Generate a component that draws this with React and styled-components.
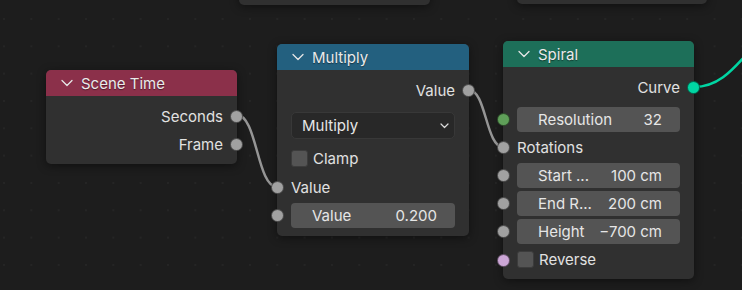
import React from "react";
import styled, { createGlobalStyle } from "styled-components";

const GlobalStyle = createGlobalStyle`
    html, body {
        margin: 0;
        padding: 0;
        background: #1d1d1d;
    }
    body {
        font-family: Inter, "Noto Sans", "DejaVu Sans", sans-serif;
        font-size: 15px;
        color: #e1e1e1;
    }
`;

const SOCKET = {
    gray: "#a1a1a1",
    int: "#5f9f59",
    geo: "#00d6a3",
    bool: "#cca6d6",
};

const Chevron = () => (
    <svg width="12" height="8" viewBox="0 0 12 8">
        <path d="M1 1.5 L6 6.5 L11 1.5" fill="none" stroke="#e6e6e6" strokeWidth="1.3" strokeLinecap="round" strokeLinejoin="round" />
    </svg>
);

const SmallChevron = () => (
    <svg width="9" height="6" viewBox="0 0 9 6">
        <path d="M1 1 L4.5 4.5 L8 1" fill="none" stroke="#dcdcdc" strokeWidth="1.2" strokeLinecap="round" strokeLinejoin="round" />
    </svg>
);

const App = () => {
    return (
        <>
            <GlobalStyle />
            <Canvas>
                <Links width="742" height="290" viewBox="0 0 742 290">
                    <path d="M237 115 C257 115 257 187 277 187" stroke="#959595" strokeWidth="2.5" fill="none" />
                    <path d="M469 90 C486 90 486 147 503 147" stroke="#959595" strokeWidth="2.5" fill="none" />
                    <path d="M694 87 C716 87 730 74 752 48" stroke={SOCKET.geo} strokeWidth="2.5" fill="none" />
                </Links>

                {/* partial nodes above the view */}
                <Node $x={239} $y={-30} $w={191}>
                    <Stub />
                </Node>
                <Node $x={517} $y={-31} $w={190}>
                    <Stub />
                </Node>

                <Node $x={46} $y={70} $w={191}>
                    <Header $color="#8b304a">
                        <Chevron />
                        <Title>Scene Time</Title>
                    </Header>
                    <Body>
                        <Row $out>
                            Seconds
                            <Socket $side="right" $color={SOCKET.gray} />
                        </Row>
                        <Row $out>
                            Frame
                            <Socket $side="right" $color={SOCKET.gray} />
                        </Row>
                    </Body>
                </Node>

                <Node $x={277} $y={44} $w={192}>
                    <Header $color="#23607f">
                        <Chevron />
                        <Title>Multiply</Title>
                    </Header>
                    <Body $bottom={7}>
                        <Row $out>
                            Value
                            <Socket $side="right" $color={SOCKET.gray} />
                        </Row>
                        <Spacer />
                        <Row $h={35}>
                            <Select>
                                Multiply
                                <SmallChevron />
                            </Select>
                        </Row>
                        <Row $h={30}>
                            <Check />
                            <CheckLabel>Clamp</CheckLabel>
                        </Row>
                        <Row>
                            Value
                            <Socket $side="left" $color={SOCKET.gray} />
                        </Row>
                        <Row>
                            <Field>
                                <span>Value</span>
                                <span>0.200</span>
                            </Field>
                            <Socket $side="left" $color={SOCKET.gray} />
                        </Row>
                    </Body>
                </Node>

                <Node $x={503} $y={41} $w={191}>
                    <Header $color="#1d6f59">
                        <Chevron />
                        <Title>Spiral</Title>
                    </Header>
                    <Body $bottom={5}>
                        <Row $out>
                            Curve
                            <Socket $side="right" $color={SOCKET.geo} />
                        </Row>
                        <Spacer />
                        <Row>
                            <Field>
                                <span>Resolution</span>
                                <span>32</span>
                            </Field>
                            <Socket $side="left" $color={SOCKET.int} />
                        </Row>
                        <Row>
                            Rotations
                            <Socket $side="left" $color={SOCKET.gray} />
                        </Row>
                        <Row>
                            <Field>
                                <span>Start ...</span>
                                <span>100 cm</span>
                            </Field>
                            <Socket $side="left" $color={SOCKET.gray} />
                        </Row>
                        <Row>
                            <Field>
                                <span>End R...</span>
                                <span>200 cm</span>
                            </Field>
                            <Socket $side="left" $color={SOCKET.gray} />
                        </Row>
                        <Row>
                            <Field>
                                <span>Height</span>
                                <span>−700 cm</span>
                            </Field>
                            <Socket $side="left" $color={SOCKET.gray} />
                        </Row>
                        <Row $h={29}>
                            <Check />
                            <CheckLabel>Reverse</CheckLabel>
                            <Socket $side="left" $color={SOCKET.bool} />
                        </Row>
                    </Body>
                </Node>
            </Canvas>
        </>
    );
};

const Canvas = styled.div`
    position: relative;
    width: 742px;
    height: 290px;
    overflow: hidden;
    background-color: #1d1d1d;
    background-image: radial-gradient(circle, #252525 0.9px, transparent 1.3px);
    background-size: 27.33px 27.33px;
    background-position: -9.67px 5.33px;
`;

const Links = styled.svg`
    position: absolute;
    left: 0;
    top: 0;
`;

const Node = styled.div`
    position: absolute;
    left: ${({ $x }) => $x}px;
    top: ${({ $y }) => $y}px;
    width: ${({ $w }) => $w}px;
    background: #303030;
    border-radius: 5px;
    box-shadow: 0 2px 10px rgba(0, 0, 0, 0.45);
`;

const Stub = styled.div`
    height: 35px;
`;

const Header = styled.div`
    height: 26px;
    display: flex;
    align-items: center;
    gap: 8px;
    padding-left: 15px;
    background: ${({ $color }) => $color};
    border-radius: 5px 5px 0 0;
`;

const Title = styled.span`
    color: #eaeaea;
    font-size: 15px;
    text-shadow: 0 1px 1px rgba(0, 0, 0, 0.45);
`;

const Body = styled.div`
    display: flex;
    flex-direction: column;
    padding: 6px 0 ${({ $bottom }) => $bottom ?? 6}px;
`;

const Row = styled.div`
    position: relative;
    height: ${({ $h }) => $h ?? 28}px;
    display: flex;
    align-items: center;
    justify-content: ${({ $out }) => ($out ? "flex-end" : "flex-start")};
    padding: 0 14px;
    white-space: nowrap;
    color: #e1e1e1;
`;

const Spacer = styled.div`
    height: 4px;
`;

const Socket = styled.span`
    position: absolute;
    top: 50%;
    ${({ $side }) => ($side === "right" ? "right: -6px;" : "left: -6px;")}
    width: 11px;
    height: 11px;
    margin-top: -6px;
    border-radius: 50%;
    background: ${({ $color }) => $color};
    border: 0.5px solid rgba(0, 0, 0, 0.5);
`;

const Field = styled.div`
    flex: 1;
    height: 25px;
    display: flex;
    align-items: center;
    justify-content: space-between;
    padding: 0 18px 0 21px;
    background: #545454;
    border-radius: 4px;
    color: #e6e6e6;
`;

const Select = styled.div`
    flex: 1;
    height: 27px;
    box-sizing: border-box;
    display: flex;
    align-items: center;
    justify-content: space-between;
    padding: 0 5px 0 10px;
    background: #282828;
    border: 1px solid #383838;
    border-radius: 5px;
    color: #e6e6e6;
`;

const Check = styled.span`
    width: 17px;
    height: 17px;
    box-sizing: border-box;
    background: #545454;
    border: 1px solid #3c3c3c;
    border-radius: 3px;
`;

const CheckLabel = styled.span`
    margin-left: 5px;
`;

export default App;
